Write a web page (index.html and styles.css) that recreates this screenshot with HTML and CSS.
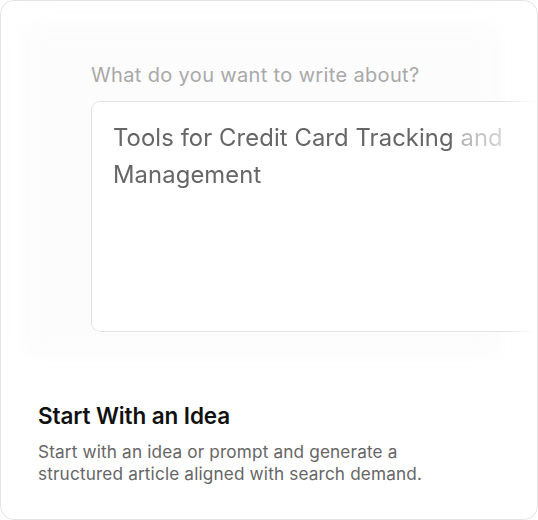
FILE: index.html
```html
<!DOCTYPE html>
<html lang="en">
<head>
<meta charset="utf-8">
<title>Start With an Idea</title>
<link rel="stylesheet" href="styles.css">
</head>
<body>
<div class="card">
  <div class="preview">
    <div class="glow"></div>
    <div class="form">
      <div class="label">What do you want to write about?</div>
      <div class="input">
        <div class="input-text">Tools for Credit Card Tracking <span class="fade">and</span><br>Management</div>
      </div>
    </div>
  </div>
  <div class="info">
    <h2 class="title">Start With an Idea</h2>
    <p class="desc">Start with an idea or prompt and generate a structured article aligned with search demand.</p>
  </div>
</div>
</body>
</html>
```
FILE: styles.css
```css
* { box-sizing: border-box; }
html, body { margin: 0; padding: 0; background: #ffffff; }
body { width: 538px; height: 520px; overflow: hidden; }

.card {
  width: 538px;
  height: 520px;
  border: 1px solid #e4e4e4;
  border-radius: 14px;
  background: #ffffff;
  overflow: hidden;
  display: flex;
  flex-direction: column;
}

.preview {
  position: relative;
  height: 370px;
  overflow: hidden;
  flex: none;
}

.glow {
  position: absolute;
  left: 20px;
  top: 22px;
  width: 480px;
  height: 334px;
  background: #fcfcfc;
  filter: blur(8px);
  border-radius: 16px;
}

.form {
  position: relative;
  padding: 61px 0 0 90px;
}

.label {
  font-family: "Inter", "Liberation Sans", sans-serif;
  font-size: 20px;
  line-height: 26px;
  color: #a9a9a9;
  letter-spacing: 0.35px;
}

.input {
  margin-top: 13px;
  width: 450px;
  height: 231px;
  border: 1px solid #e2e2e2;
  border-right: none;
  border-radius: 9px 0 0 9px;
  background: #ffffff;
  padding: 17px 0 0 21px;
  -webkit-mask-image: linear-gradient(to right, #000 0, #000 410px, transparent 445px);
  mask-image: linear-gradient(to right, #000 0, #000 410px, transparent 445px);
}

.input-text {
  font-family: "Inter", "Liberation Sans", sans-serif;
  font-size: 23.8px;
  line-height: 37px;
  letter-spacing: 0.1px;
  color: #666666;
  white-space: nowrap;
}

.fade {
  background: linear-gradient(to right, #b4b4b4, #d6d6d6);
  -webkit-background-clip: text;
  background-clip: text;
  color: transparent;
}

.info {
  padding: 31px 20px 0 37px;
}

.title {
  margin: 0;
  font-family: "Inter", "Liberation Sans", sans-serif;
  font-weight: 600;
  font-size: 22.5px;
  line-height: 28px;
  letter-spacing: -0.1px;
  color: #111111;
}

.desc {
  margin: 11px 0 0 0;
  width: 440px;
  font-family: "Inter", "Liberation Sans", sans-serif;
  font-size: 17.2px;
  line-height: 22px;
  letter-spacing: 0.15px;
  color: #666666;
}
```
